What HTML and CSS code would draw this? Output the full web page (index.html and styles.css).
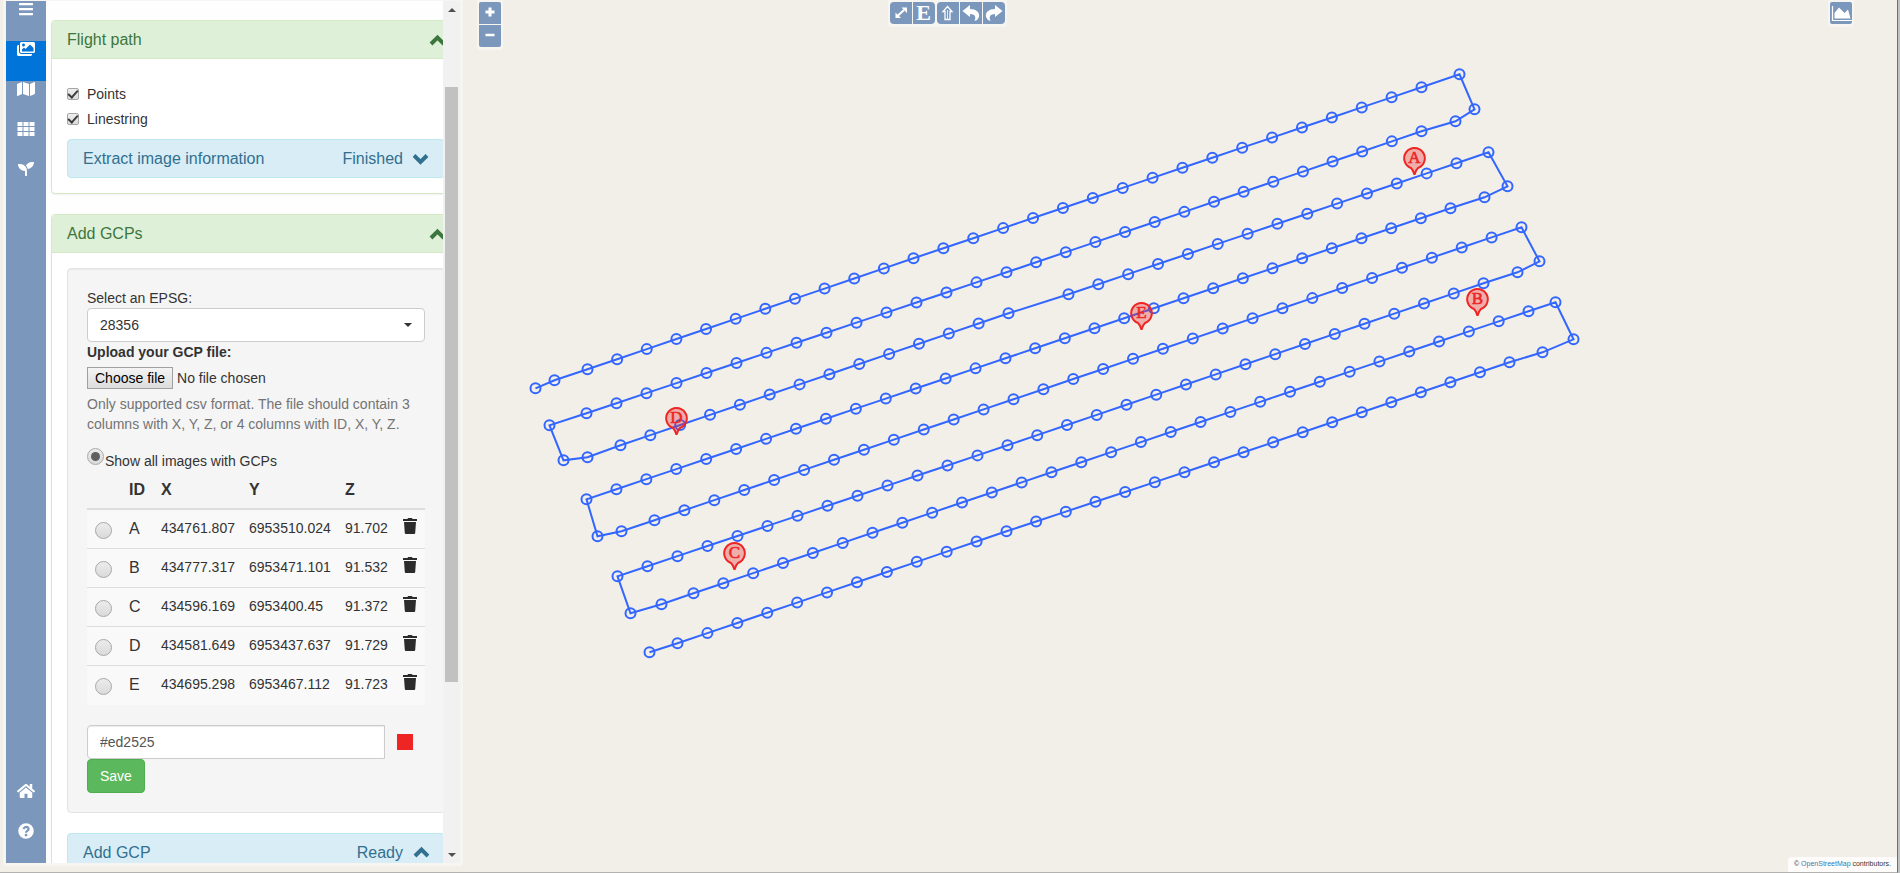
FILE: index.html
```html
<!DOCTYPE html>
<html lang="en">
<head>
<meta charset="utf-8">
<title>Flight path and GCPs</title>
<link rel="stylesheet" href="styles.css">
</head>
<body>
<div class="app">
  <main class="map">
    <svg class="map-canvas" id="map-canvas" role="img" aria-label="Flight path"></svg>

    <div class="control zoom-control">
      <button type="button" aria-label="Zoom in"><svg viewBox="0 0 22 22"><path d="M11 5.500v9M6.500 10h9" stroke="#fff" stroke-width="3"/></svg></button>
      <button type="button" aria-label="Zoom out"><svg viewBox="0 0 22 22"><path d="M6.500 10h9" stroke="#fff" stroke-width="2.500"/></svg></button>
    </div>

    <div class="control toolbar">
      <div class="button-group">
        <button type="button" aria-label="Full extent"><svg viewBox="0 0 22 22"><path d="M8 13.500L14 8" stroke="#fff" stroke-width="2"/><path d="M11.500 5.500H17V11zM5.500 10.500V16H11z" fill="#fff"/></svg></button>
        <button type="button" class="letter-button">E</button>
      </div>
      <div class="button-group">
        <button type="button" aria-label="Up"><svg viewBox="0 0 22 22"><path d="M10.500 4.500L15 9.500H13V17.500H8V9.500H6z" fill="none" stroke="#fff" stroke-width="1.300"/><path d="M10.500 8v9" stroke="#fff" stroke-width=".8"/></svg></button>
        <button type="button" aria-label="Undo"><svg viewBox="0 0 22 22"><path d="M2.500 9L10 3V7C16 7 20 10 19 15Q18 18 14.500 19Q17.500 12 10 12V15z" fill="#fff"/></svg></button>
        <button type="button" aria-label="Redo"><svg viewBox="0 0 22 22"><path d="M19.500 9L12 3V7C6 7 2 10 3 15Q4 18 7.500 19Q4.500 12 12 12V15z" fill="#fff"/></svg></button>
      </div>
    </div>

    <div class="control chart-control">
      <button type="button" aria-label="Chart"><svg viewBox="0 0 22 22"><path d="M2.500 4V18.500H22" fill="none" stroke="#fff" stroke-width="1.200"/><path d="M4.500 16.500V11L9 5.500L14.500 11L18 7.500L20.500 16.500z" fill="#fff"/></svg></button>
    </div>

    <footer class="attribution">© <a href="#">OpenStreetMap</a> contributors.</footer>

    <aside class="sidebar">
      <nav class="tabs">
        <a class="tab" href="#" aria-label="Menu"><svg width="14" height="16" viewBox="0 0 448 512"><path d="M16 132h416c9 0 16-7 16-16V76c0-9-7-16-16-16H16C7 60 0 67 0 76v40c0 9 7 16 16 16zm0 160h416c9 0 16-7 16-16v-40c0-9-7-16-16-16H16c-9 0-16 7-16 16v40c0 9 7 16 16 16zm0 160h416c9 0 16-7 16-16v-40c0-9-7-16-16-16H16c-9 0-16 7-16 16v40c0 9 7 16 16 16z"/></svg></a>
        <a class="tab tab-active" href="#" aria-label="Images"><svg width="18" height="16" viewBox="0 0 576 512"><path d="M480 416v16c0 26.510-21.490 48-48 48H48c-26.510 0-48-21.490-48-48V176c0-26.510 21.490-48 48-48h16v208c0 44.112 35.888 80 80 80h336zm96-80V80c0-26.510-21.490-48-48-48H144c-26.510 0-48 21.490-48 48v256c0 26.510 21.490 48 48 48h384c26.510 0 48-21.490 48-48zM256 128c0 26.510-21.490 48-48 48s-48-21.490-48-48 21.490-48 48-48 48 21.490 48 48zm-96 144l55.515-55.515c4.686-4.686 12.284-4.686 16.971 0L272 256l135.515-135.515c4.686-4.686 12.284-4.686 16.971 0L528 224v112H160v-64z"/></svg></a>
        <a class="tab" href="#" aria-label="Map"><svg width="18" height="16" viewBox="0 0 576 512"><path d="M0 117.660v346.320c0 11.320 11.430 19.060 21.940 14.860L160 416V32L20.120 87.950A32 32 0 0 0 0 117.660zM192 416l192 64V96L192 32v384zM554.060 33.160L416 96v384l139.880-55.950A32 32 0 0 0 576 394.340V48.020c0-11.320-11.430-19.060-21.940-14.860z"/></svg></a>
        <a class="tab" href="#" aria-label="Grid"><svg width="18" height="16" viewBox="0 0 576 512"><path d="M16 32h160v128H16zM208 32h160v128H208zM400 32h160v128H400zM16 192h160v128H16zM208 192h160v128H208zM400 192h160v128H400zM16 352h160v128H16zM208 352h160v128H208zM400 352h160v128H400z"/></svg></a>
        <a class="tab" href="#" aria-label="Plants"><svg width="16" height="16" viewBox="0 0 512 512"><path d="M64 96H0c0 123.700 100.300 224 224 224v144c0 8.800 7.200 16 16 16h32c8.800 0 16-7.200 16-16V320C288 196.300 187.700 96 64 96zm384-64c-84.200 0-157.400 46.500-195.700 115.200 27.700 30.200 48.200 66.900 59 107.600C424 243.100 512 147.900 512 32h-64z"/></svg></a>
        <a class="tab tab-bottom" href="#" aria-label="Home"><svg width="18" height="16" viewBox="0 0 576 512"><path d="M488 312.700V456c0 13.300-10.700 24-24 24H348c-6.600 0-12-5.400-12-12V356c0-6.600-5.400-12-12-12h-72c-6.600 0-12 5.400-12 12v112c0 6.600-5.400 12-12 12H112c-13.300 0-24-10.700-24-24V312.700c0-3.600 1.600-7 4.400-9.300l188-154.800c4.400-3.600 10.800-3.600 15.300 0l188 154.800c2.700 2.300 4.300 5.700 4.300 9.300zm83.600-60.900L488 182.900V44.400c0-6.600-5.400-12-12-12h-56c-6.600 0-12 5.400-12 12V117l-89.500-73.700c-17.700-14.600-43.300-14.600-61 0L4.400 251.800c-5.100 4.200-5.800 11.800-1.600 16.900l25.500 31c4.200 5.100 11.800 5.800 16.900 1.600l235.200-193.700c4.400-3.600 10.800-3.600 15.300 0l235.200 193.700c5.100 4.200 12.700 3.500 16.900-1.600l25.500-31c4.200-5.200 3.400-12.700-1.700-16.900z"/></svg></a>
        <a class="tab" href="#" aria-label="Help"><svg width="16" height="16" viewBox="0 0 512 512"><circle cx="256" cy="256" r="248"/><path class="cut" d="M172 190Q205 124 262 124Q338 130 338 192Q338 230 296 252Q256 272 256 312"/><circle class="cut-dot" cx="256" cy="384" r="44"/></svg></a>
      </nav>

      <div class="pane">
        <section class="panel panel-success">
          <h4 class="panel-heading"><span>Flight path</span><svg class="chevron" viewBox="0 0 16 16"><path d="M2 12L8.500 5.500L15 12"/></svg></h4>
          <div class="panel-body">
            <div class="checks">
              <label class="check"><input type="checkbox" checked>Points</label>
              <label class="check"><input type="checkbox" checked>Linestring</label>
            </div>
            <div class="panel-heading panel-info"><span>Extract image information</span><span class="status">Finished</span><svg class="chevron" viewBox="0 0 16 16"><path d="M1 4.500L7.500 11L14 4.500"/></svg></div>
          </div>
        </section>

        <section class="panel panel-success">
          <h4 class="panel-heading"><span>Add GCPs</span><svg class="chevron" viewBox="0 0 16 16"><path d="M2 12L8.500 5.500L15 12"/></svg></h4>
          <div class="panel-body">
            <form class="well">
              <label class="line" for="epsg">Select an EPSG:</label>
              <div class="select-box"><select id="epsg"><option>28356</option></select></div>
              <label class="line strong" for="gcp-file">Upload your GCP file:</label>
              <div class="file-row">
                <label class="file-button" for="gcp-file">Choose file</label><span>No file chosen</span>
                <input class="file-input" type="file" id="gcp-file">
              </div>
              <p class="help">Only supported csv format. The file should contain 3 columns with X, Y, Z, or 4 columns with ID, X, Y, Z.</p>
              <div class="show-all"><input type="radio" name="gcp" id="show-all" checked><label for="show-all">Show all images with GCPs</label></div>
              <table class="gcps">
                <colgroup><col class="col-radio"><col class="col-id"><col class="col-x"><col class="col-y"><col class="col-z"><col class="col-trash"></colgroup>
                <thead><tr><th></th><th>ID</th><th>X</th><th>Y</th><th>Z</th><th></th></tr></thead>
                <tbody id="gcp-rows"></tbody>
              </table>
              <div class="color-row">
                <input class="color-text" type="text" value="#ed2525" aria-label="Marker color">
                <button class="swatch" type="button" aria-label="Pick color"></button>
              </div>
              <button class="save" type="button">Save</button>
            </form>
            <div class="panel-heading panel-info"><span>Add GCP</span><span class="status">Ready</span><svg class="chevron" viewBox="0 0 16 16"><path d="M2 12L8.500 5.500L15 12"/></svg></div>
          </div>
        </section>
      </div>

      <div class="scrollbar" aria-hidden="true">
        <span class="arrow arrow-up"></span>
        <div class="track"><div class="thumb"></div></div>
        <span class="arrow arrow-down"></span>
      </div>
    </aside>
  </main>
  <div class="edge"></div>
</div>
<script src="app.js"></script>
</body>
</html>
```

FILE: styles.css
```css
* { box-sizing: border-box; }

body {
  margin: 0;
  font: 14px/20px "Liberation Sans", Arial, sans-serif;
  color: #333;
}

button, input, select { font: inherit; color: inherit; margin: 0; }

.app { display: flex; height: 100vh; overflow: hidden; background: #f2efe9; }

.map {
  position: relative;
  flex: 1;
  border-right: 1px solid #6e7070;
  border-bottom: 1px solid #b4b2b0;
}

.map-canvas { position: absolute; inset: 0; width: 100%; height: 100%; }
.flight-line { fill: none; stroke: #3366ff; stroke-width: 2; }
.flight-point { fill: none; stroke: #3366ff; stroke-width: 2; }
.pin path { fill: rgba(237, 37, 37, .32); stroke: #ed2525; stroke-width: 2; }
.pin text {
  fill: #ed2525;
  stroke: #ed2525;
  stroke-width: .6;
  font: 17px "Liberation Serif", serif;
  text-anchor: middle;
}

.edge { width: 2px; background: #bfc3c3; }

/* Map controls */
.control {
  position: absolute;
  top: 0;
  padding: 2px 2px 3px;
  border-radius: 0 0 4px 4px;
  background: rgba(255, 255, 255, .4);
}
.control button {
  display: block;
  width: 22px;
  height: 22px;
  padding: 0;
  border: 0;
  background: #7b98bc;
  color: #fff;
}
.control svg { display: block; width: 22px; height: 22px; }
.zoom-control { left: 477px; display: grid; gap: 1px; }
.zoom-control button:first-child { border-radius: 2px 2px 0 0; }
.zoom-control button:last-child { border-radius: 0 0 2px 2px; }
.toolbar { left: 50%; display: flex; gap: 2px; margin-left: -61px; }
.button-group { display: flex; gap: 1px; }
.button-group button:first-child { border-radius: 4px 0 0 4px; }
.button-group button:last-child { border-radius: 0 4px 4px 0; }
.control .letter-button { font: bold 22px/22px "Liberation Serif", serif; }
.chart-control { right: 43px; }
.chart-control button { border-radius: 2px; }

.attribution {
  position: absolute;
  right: 0;
  bottom: 0;
  padding: 0 6px 1px;
  border-radius: 4px 0 0 0;
  background: rgba(255, 255, 255, .8);
  font-size: 7px;
  line-height: 14px;
}
.attribution a { color: #337ab7; text-decoration: none; }

/* Sidebar */
.sidebar {
  position: absolute;
  top: 0;
  bottom: 6px;
  left: 3px;
  display: flex;
  width: 460px;
  padding: 1px 3px 3px;
  border-radius: 0 0 4px 4px;
  background: rgba(255, 255, 255, .4);
}

.tabs { display: flex; flex-direction: column; width: 40px; background: #7b98bc; }
.tab { display: flex; justify-content: center; height: 40px; fill: #fff; }
.tab-active { background: #0074d9; }
.tab-bottom { margin-top: auto; }
.cut { fill: none; stroke: #7b98bc; stroke-width: 70; }
.cut-dot { fill: #7b98bc; }

.pane { flex: 1; min-width: 0; overflow: hidden; padding: 19px 0 0 5px; background: #fefefe; }

.panel {
  margin: 0 -18px 20px 0;
  border: 1px solid #d6e9c6;
  border-radius: 4px;
  background: #fff;
  box-shadow: 0 1px 1px rgba(0, 0, 0, .05);
}
.panel-heading {
  display: flex;
  align-items: center;
  margin: 0;
  padding: 10px 15px;
  font-size: 16px;
  font-weight: 400;
  line-height: 17px;
}
.panel-success > .panel-heading {
  border-bottom: 1px solid #d6e9c6;
  border-radius: 3px 3px 0 0;
  background: #dff0d8;
  color: #3c763d;
}
.panel-info {
  border: 1px solid #bce8f1;
  border-radius: 4px;
  background: #d9edf7;
  color: #31708f;
}
.chevron { width: 16px; height: 16px; margin-left: auto; fill: none; stroke: currentColor; stroke-width: 4; }
.status { margin-left: auto; }
.status + .chevron { margin-left: 10px; }
.panel-body { padding: 15px; }

.checks { display: grid; gap: 5px; padding: 10px 0; }
.check { display: flex; align-items: center; gap: 8px; }
input[type="checkbox"] {
  appearance: none;
  display: grid;
  place-items: center;
  width: 12px;
  height: 12px;
  border: 1px solid #a6a6a6;
  border-radius: 2px;
  background: linear-gradient(#eee, #dcdcdc);
}
input[type="checkbox"]:checked::after {
  content: "";
  width: 4px;
  height: 8px;
  margin-top: -2px;
  border: solid #3c3c3c;
  border-width: 0 2px 2px 0;
  transform: rotate(42deg);
}
input[type="radio"] {
  appearance: none;
  flex: none;
  display: grid;
  place-items: center;
  width: 17px;
  height: 17px;
  border: 1px solid #a9a9a9;
  border-radius: 50%;
  background: linear-gradient(#ececec, #dadada);
}
input[type="radio"]:checked::after {
  content: "";
  width: 9px;
  height: 9px;
  border-radius: 50%;
  background: #606060;
}

.well {
  margin-bottom: 20px;
  padding: 19px;
  border: 1px solid #e3e3e3;
  border-radius: 4px;
  background: #f5f5f5;
  box-shadow: inset 0 1px 1px rgba(0, 0, 0, .05);
}
.line { display: block; }
.strong { font-weight: 700; }

.select-box { position: relative; }
.select-box::after {
  content: "";
  position: absolute;
  top: 15px;
  right: 13px;
  border: 4px solid transparent;
  border-top-color: #333;
  border-bottom: 0;
}
.select-box select {
  appearance: none;
  display: block;
  width: 100%;
  height: 34px;
  padding: 0 12px;
  border: 1px solid #ccc;
  border-radius: 4px;
  background: #fff;
}

.file-row { position: relative; display: flex; align-items: center; gap: 4px; height: 32px; }
.file-button {
  padding: 0 7px;
  border: 1px solid #a0a0a0;
  background: linear-gradient(#f4f4f4, #dcdcdc);
  color: #000;
}
.file-input { position: absolute; inset: 0; width: 100%; opacity: 0; }

.help { margin: 0 0 10px; color: #737373; }
.show-all { display: flex; gap: 1px; height: 27px; padding-top: 4px; }
.show-all label { padding-top: 3px; }

.gcps { width: 100%; table-layout: fixed; border-collapse: collapse; }
.col-radio { width: 34px; }
.col-id { width: 32px; }
.col-x { width: 88px; }
.col-y { width: 96px; }
.col-z { width: 58px; }
.col-trash { width: 30px; }
.gcps th {
  height: 38px;
  padding: 9px 8px 7px;
  border-bottom: 2px solid #ddd;
  font-size: 16px;
  line-height: 20px;
  text-align: left;
  vertical-align: top;
}
.gcps td { height: 39px; padding: 8px; border-top: 1px solid #ddd; vertical-align: top; }
.gcps td:first-child, .gcps td:last-child { padding-right: 0; }
.gcps td:first-child { padding-top: 12px; }
.gcps tbody tr { background: #f9f9f9; }
.gcps tbody tr:first-child td { border-top: 0; }
.gcps .id { font-size: 16px; line-height: 22px; }
.trash {
  display: block;
  width: 14px;
  height: 16px;
  padding: 0;
  border: 0;
  background: none;
}
.trash svg { display: block; fill: #2b2b2b; }

.color-row { display: flex; align-items: center; margin-top: 20px; }
.color-text {
  flex: 1;
  min-width: 0;
  height: 34px;
  padding: 0 12px;
  border: 1px solid #ccc;
  border-radius: 4px 0 0 4px;
  background: #fff;
  box-shadow: inset 0 1px 1px rgba(0, 0, 0, .08);
  color: #555;
}
.swatch { width: 16px; height: 16px; margin: 0 12px; padding: 0; border: 0; background: #ed2525; }
.save {
  display: block;
  height: 34px;
  padding: 0 12px;
  border: 1px solid #4cae4c;
  border-radius: 4px;
  background: #5cb85c;
  color: #fff;
}

.scrollbar { display: flex; flex-direction: column; align-items: center; width: 17px; background: #f1f1f1; }
.track { flex: 1; width: 13px; padding-top: 69px; }
.thumb { height: 78.4%; background: #c1c1c1; }
.arrow { height: 17px; display: grid; place-items: center; }
.arrow::after { content: ""; border: 4px solid transparent; }
.arrow-up::after { border-top: 0; border-bottom-color: #505050; }
.arrow-down::after { border-bottom: 0; border-top-color: #505050; }
```

FILE: app.js
```js
// Waypoints as [x, y, steps]: "steps" photo positions are spread evenly up to the waypoint.
const waypoints = [
  [535, 388, 1], [554, 380, 1], [587, 369, 1], [913, 258, 11], [1421, 87, 17], [1459, 74, 1],
  [1474, 109, 1], [1455, 121, 1], [1421, 131, 1], [1006, 272, 14], [586, 413, 14], [549, 425, 1],
  [563, 460, 1], [587, 457, 1], [620, 445, 1], [1008, 313, 13], [1068, 294, 1], [1456, 163, 13], [1488, 152, 1],
  [1507, 186, 1], [1484, 197, 1], [1450, 208, 1], [1005, 358, 15], [586, 499, 14],
  [597, 536, 1], [621, 531, 1], [654, 520, 1], [1013, 399, 12], [1521, 227, 17],
  [1539, 261, 1], [1517, 272, 1], [1483, 283, 1], [1007, 445, 16], [617, 576, 13],
  [630, 613, 1], [661, 604, 1], [693, 593, 1], [1051, 472, 12], [1528, 311, 16], [1555, 302, 1],
  [1573, 339, 1], [1542, 352, 1], [1509, 362, 1], [1184, 472, 11], [1006, 531, 6], [677, 643, 11], [649, 652, 1]
];

const gcps = [
  { id: "A", x: "434761.807", y: "6953510.024", z: "91.702", pin: [1414, 158] },
  { id: "B", x: "434777.317", y: "6953471.101", z: "91.532", pin: [1477, 299] },
  { id: "C", x: "434596.169", y: "6953400.45", z: "91.372", pin: [734, 553] },
  { id: "D", x: "434581.649", y: "6953437.637", z: "91.729", pin: [676, 418] },
  { id: "E", x: "434695.298", y: "6953467.112", z: "91.723", pin: [1141, 313] }
];

const points = [];
let previous = null;
for (const [x, y, steps] of waypoints) {
  for (let i = 1; i <= steps; i++) {
    const t = i / steps;
    points.push(previous
      ? [previous[0] + (x - previous[0]) * t, previous[1] + (y - previous[1]) * t]
      : [x, y]);
  }
  previous = [x, y];
}

const line = `<polyline class="flight-line" points="${points.map(p => p.join(",")).join(" ")}"/>`;
const dots = points.map(([x, y]) => `<circle class="flight-point" cx="${x}" cy="${y}" r="5"/>`).join("");
const pins = gcps.map(({ id, pin: [x, y] }) =>
  `<g class="pin" transform="translate(${x} ${y})">
    <path d="M0 16.500Q-1 12-3.500 9.700A10.300 10.300 0 1 1 3.500 9.700Q1 12 0 16.500Z"/><text y="5">${id}</text>
  </g>`).join("");
document.getElementById("map-canvas").innerHTML = `<g transform="translate(.5 .3)">${line}${dots}${pins}</g>`;

document.getElementById("gcp-rows").innerHTML = gcps.map(g => `
  <tr>
    <td><input type="radio" name="gcp" aria-label="GCP ${g.id}"></td>
    <td class="id">${g.id}</td><td>${g.x}</td><td>${g.y}</td><td>${g.z}</td>
    <td><button class="trash" type="button" aria-label="Delete ${g.id}"><svg width="14" height="16" viewBox="0 0 14 16"><path d="M0 1h4.500L5 0h4l.5 1H14v2H0zM1 4h12l-.8 11q-.1 1-1 1H2.800q-.9 0-1-1z"/></svg></button></td>
  </tr>`).join("");
```
